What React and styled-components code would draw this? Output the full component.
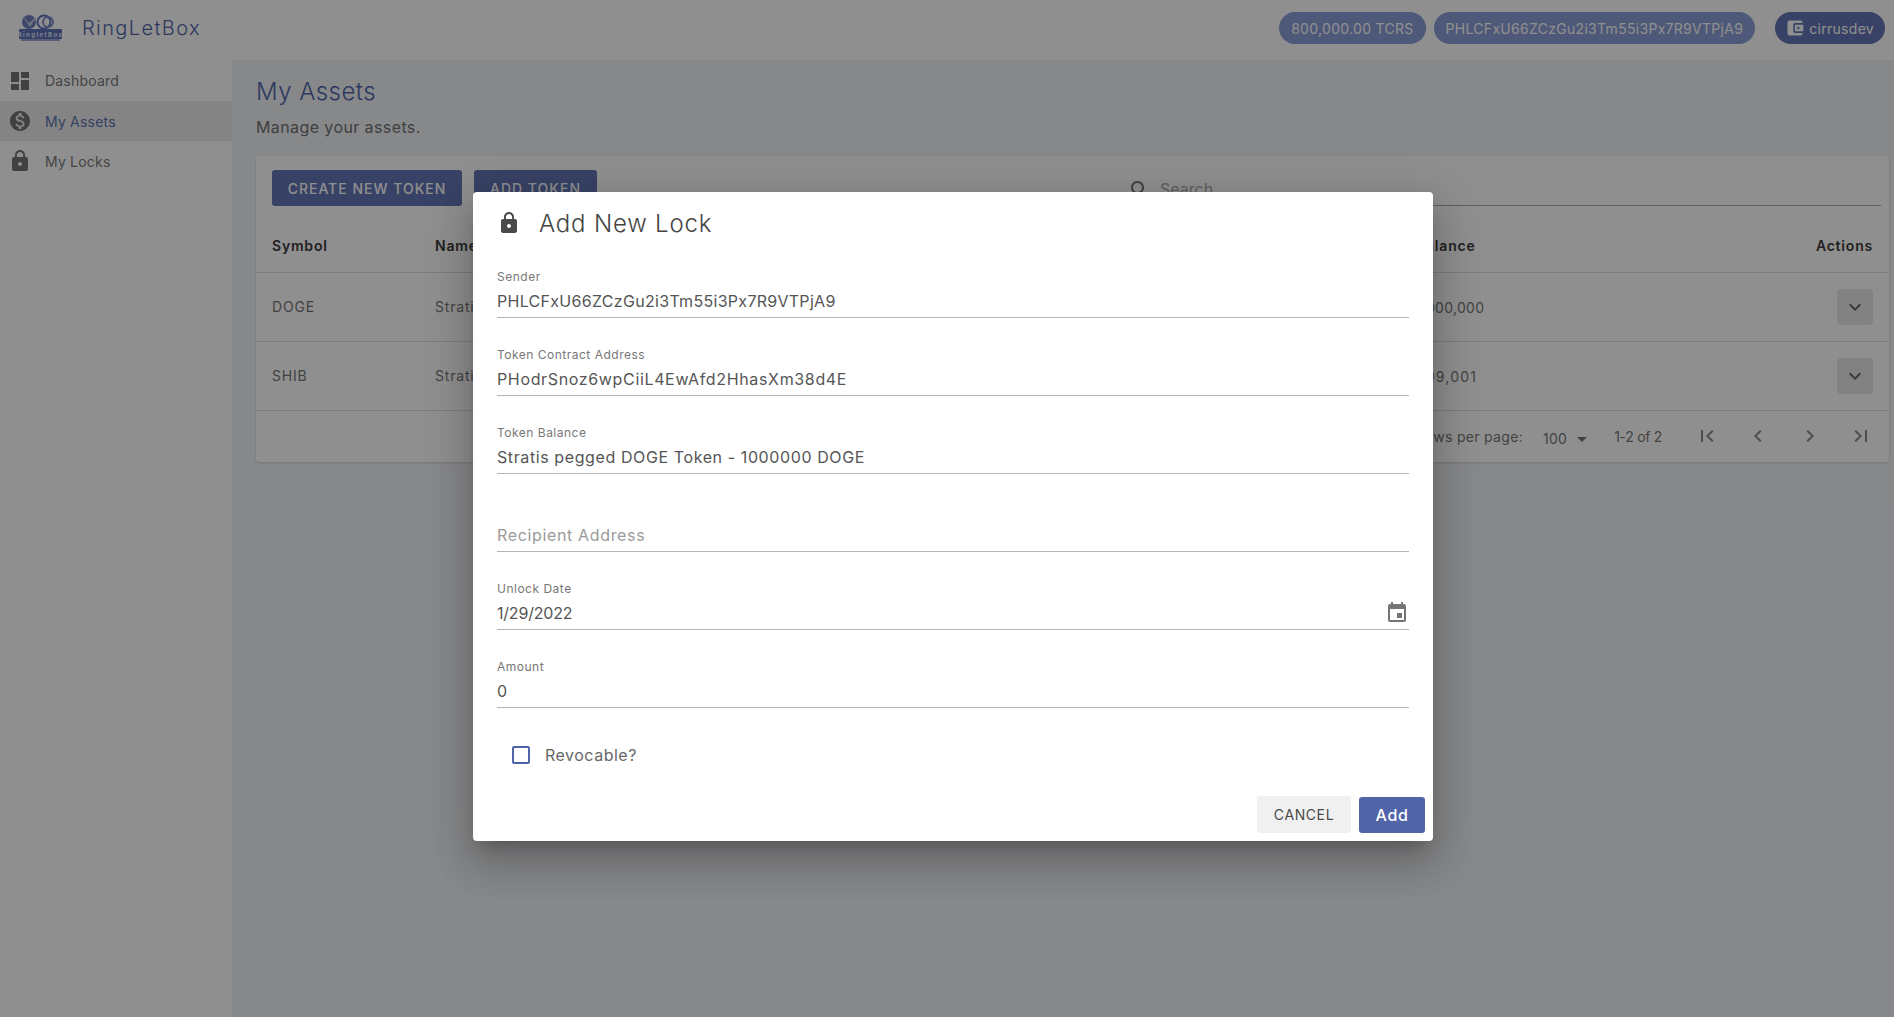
import React from 'react'
import styled, { createGlobalStyle } from 'styled-components'

const FONT = '"Inter", "Liberation Sans", sans-serif'

const ICONS = {
  dashboard: 'M3 13h8V3H3v10zm0 8h8v-6H3v6zm10 0h8V11h-8v10zm0-18v6h8V3h-8z',
  money: 'M12 2C6.48 2 2 6.48 2 12s4.48 10 10 10 10-4.48 10-10S17.52 2 12 2zm1.41 16.09V20h-2.67v-1.93c-1.71-.36-3.16-1.46-3.27-3.4h1.96c.1 1.05.82 1.87 2.65 1.87 1.96 0 2.4-.98 2.4-1.59 0-.83-.44-1.61-2.67-2.14-2.48-.6-4.18-1.62-4.18-3.67 0-1.72 1.39-2.84 3.11-3.21V4h2.67v1.95c1.86.45 2.79 1.86 2.85 3.39H14.3c-.05-1.11-.64-1.87-2.22-1.87-1.5 0-2.4.68-2.4 1.64 0 .84.65 1.39 2.67 1.91s4.18 1.39 4.18 3.91c-.01 1.83-1.38 2.83-3.12 3.16z',
  lock: 'M18 8h-1V6c0-2.76-2.24-5-5-5S7 3.24 7 6v2H6c-1.1 0-2 .9-2 2v10c0 1.1.9 2 2 2h12c1.1 0 2-.9 2-2V10c0-1.1-.9-2-2-2zm-6 9c-1.1 0-2-.9-2-2s.9-2 2-2 2 .9 2 2-.9 2-2 2zm3.1-9H8.9V6c0-1.71 1.39-3.1 3.1-3.1 1.71 0 3.1 1.39 3.1 3.1v2z',
  wallet: 'M21 18v1c0 1.1-.9 2-2 2H5c-1.11 0-2-.9-2-2V5c0-1.1.89-2 2-2h14c1.1 0 2 .9 2 2v1h-9c-1.11 0-2 .9-2 2v8c0 1.1.89 2 2 2h9zm-9-2h10V8H12v8zm4-2.5c-.83 0-1.5-.67-1.5-1.5s.67-1.5 1.5-1.5 1.5.67 1.5 1.5-.67 1.5-1.5 1.5z',
  event: 'M17 12h-5v5h5v-5zM16 1v2H8V1H6v2H5c-1.11 0-1.99.9-1.99 2L3 19c0 1.1.89 2 2 2h14c1.1 0 2-.9 2-2V5c0-1.1-.9-2-2-2h-1V1h-2zm3 18H5V8h14v11z',
  down: 'M7.41 8.59 12 13.17l4.59-4.58L18 10l-6 6-6-6 1.41-1.41z',
  first: 'M18.41 16.59L13.82 12l4.59-4.59L17 6l-6 6 6 6zM6 6h2v12H6z',
  prev: 'M15.41 16.59 10.83 12l4.58-4.59L14 6l-6 6 6 6 1.41-1.41z',
  next: 'M8.59 16.59 13.17 12 8.59 7.41 10 6l6 6-6 6-1.41-1.41z',
  last: 'M5.59 7.41L10.18 12l-4.59 4.59L7 18l6-6-6-6zM16 6h2v12h-2z',
  search: 'M15.5 14h-.79l-.28-.27C15.41 12.59 16 11.11 16 9.5 16 5.91 13.09 3 9.5 3S3 5.91 3 9.5 5.91 16 9.5 16c1.61 0 3.09-.59 4.23-1.57l.27.28v.79l5 4.99L20.49 19l-4.99-5zm-6 0C7.01 14 5 11.99 5 9.5S7.01 5 9.5 5 14 7.01 14 9.5 11.99 14 9.5 14z',
  caret: 'M7 10l5 5 5-5z'
}

const Icon = ({ name, size = 24, color = 'currentColor' }) => (
  <svg width={size} height={size} viewBox="0 0 24 24" fill={color} style={{ flexShrink: 0, display: 'block' }}>
    <path d={ICONS[name]} />
  </svg>
)

/* STYLES */
const Global = createGlobalStyle`
  html, body { margin: 0; padding: 0; height: 100%; }
  body { font-family: ${FONT}; background: #fff; overflow: hidden; }
  * { box-sizing: border-box; }
`

const Page = styled.div`
  position: relative;
  width: 1894px;
  height: 1017px;
  display: flex;
  flex-direction: column;
  overflow: hidden;
`

const TopBar = styled.header`
  height: 60px;
  flex-shrink: 0;
  display: flex;
  align-items: center;
  padding: 0 9px 4px 19px;
  background: #fff;
`

const Brand = styled.div`
  flex: 1;
  display: flex;
  align-items: center;
  gap: 19px;
  font-size: 20px;
  font-weight: 300;
  letter-spacing: 1.4px;
  color: #5065a8;
`

const Chip = styled.div`
  height: 32px;
  display: flex;
  align-items: center;
  gap: 4px;
  padding: 0 ${props => props.$right || 12}px 0 ${props => props.$left || 12}px;
  border-radius: 16px;
  margin-left: ${props => props.$gap || 0}px;
  font-size: 14px;
  letter-spacing: 0.3px;
  color: #fff;
  background: ${props => (props.$faded ? '#8b9dd6' : '#6476b6')};
`

const Body = styled.div`
  flex: 1;
  display: flex;
`

const Sidebar = styled.nav`
  width: 232px;
  flex-shrink: 0;
  background: #fff;
`

const NavItem = styled.div`
  height: ${props => props.$height || 40}px;
  display: flex;
  align-items: center;
  gap: 13px;
  padding-left: 8px;
  font-size: 14px;
  letter-spacing: 0.2px;
  color: ${props => (props.$active ? '#5f72b0' : '#7a7a7a')};
  background: ${props => (props.$active ? '#ebebeb' : 'transparent')};
  svg { color: #757575; }
`

const Main = styled.main`
  flex: 1;
  padding: 15px 5px 0 24px;
  background: #f1f3f7;
`

const Title = styled.h1`
  margin: 0;
  font-size: 24px;
  line-height: 34px;
  font-weight: 300;
  letter-spacing: 0.45px;
  color: #5065a8;
`

const Subtitle = styled.p`
  margin: 6px 0 17px;
  font-size: 16px;
  line-height: 24px;
  letter-spacing: 0.4px;
  color: #707070;
`

const Card = styled.section`
  height: 306px;
  border-radius: 4px;
  background: #fff;
  box-shadow: 0 1px 3px rgba(0, 0, 0, 0.15);
`

const Toolbar = styled.div`
  height: 51px;
  display: flex;
  align-items: flex-start;
  gap: 12px;
  padding: 14px 8px 0 16px;
`

const PrimaryButton = styled.div`
  height: 36px;
  display: flex;
  align-items: center;
  justify-content: center;
  width: ${props => props.$width}px;
  border-radius: 3px;
  background: #6476b6;
  color: #fff;
  font-size: 14px;
  font-weight: 500;
  letter-spacing: 1px;
`

const SearchBox = styled.div`
  width: 782px;
  height: 36px;
  margin-left: auto;
  display: flex;
  align-items: center;
  gap: 8px;
  padding: 2px 0 0 29px;
  border-bottom: 1px solid #aaa;
  font-size: 16px;
  color: #a8a8a8;
  svg { color: #757575; margin-top: 2px; }
`

const Row = styled.div`
  height: ${props => props.$height}px;
  display: grid;
  grid-template-columns: 163px 1fr 60px;
  align-items: center;
  padding: ${props => (props.$head ? '12px 16px 0' : '0 16px')};
  border-bottom: 1px solid #dedede;
  font-size: 14px;
  letter-spacing: 0.8px;
  color: ${props => (props.$head ? '#3a3a3a' : '#777')};
  font-weight: ${props => (props.$head ? 600 : 400)};
`

const CellText = styled.span`
  position: relative;
  top: ${props => (props.$head ? 0 : -1)}px;
`

const Balance = styled.span`
  position: absolute;
  left: 981px;
  letter-spacing: ${props => props.$spacing}px;
`

const RowCell = styled.div`
  position: relative;
  display: flex;
  align-items: center;
`

const ActionCell = styled.div`
  justify-self: end;
`

const ExpandButton = styled.div`
  width: 36px;
  height: 36px;
  display: flex;
  align-items: center;
  justify-content: center;
  border-radius: 4px;
  background: #e8e8e8;
  color: #6a6a6a;
`

const Pagination = styled.div`
  height: 51px;
  display: flex;
  align-items: center;
  justify-content: flex-end;
  padding-right: 16px;
  font-size: 14px;
  letter-spacing: 0.3px;
  color: #777;
`

const PerPage = styled.div`
  display: flex;
  align-items: center;
  gap: 3px;
  margin: 0 20px;
  position: relative;
  top: 2px;
`

const PageRange = styled.span`
  letter-spacing: -0.3px;
`

const PageIcon = styled.div`
  width: 24px;
  margin-left: ${props => props.$gap}px;
  color: #888;
  position: relative;
  top: -1px;
`

const Backdrop = styled.div`
  position: absolute;
  inset: 0;
  background: rgba(0, 0, 0, 0.44);
`

const Dialog = styled.div`
  position: absolute;
  left: 473px;
  top: 192px;
  width: 960px;
  height: 649px;
  display: flex;
  flex-direction: column;
  border-radius: 4px;
  background: #fff;
  box-shadow: 0 11px 15px -7px rgba(0, 0, 0, 0.2), 0 24px 38px 3px rgba(0, 0, 0, 0.14), 0 9px 46px 8px rgba(0, 0, 0, 0.12);
`

const DialogTitle = styled.div`
  height: 62px;
  display: flex;
  align-items: center;
  gap: 18px;
  padding-left: 24px;
  font-size: 24px;
  font-weight: 300;
  letter-spacing: 0.8px;
  color: #444;
  svg { color: #4a4a4a; }
`

const Fields = styled.div`
  padding: 0 24px;
`

const Field = styled.div`
  height: 78px;
  padding-top: 16px;
`

const FieldLabel = styled.div`
  height: 14px;
  line-height: 14px;
  font-size: 12px;
  letter-spacing: 0.5px;
  color: #777;
`

const FieldValue = styled.div`
  height: 34px;
  display: flex;
  align-items: center;
  justify-content: space-between;
  padding-top: 1px;
  border-bottom: 1px solid #b5b5b5;
  font-size: 16px;
  letter-spacing: ${props => props.$spacing}px;
  color: ${props => (props.$placeholder ? '#9a9a9a' : '#555')};
  svg { color: #757575; }
`

const CheckRow = styled.div`
  display: flex;
  align-items: center;
  gap: 15px;
  margin-top: 23px;
  padding-left: 15px;
  font-size: 16px;
  letter-spacing: 0.5px;
  color: #666;
`

const CheckBox = styled.div`
  width: 18px;
  height: 18px;
  border: 2px solid #5065a8;
  border-radius: 2px;
`

const DialogActions = styled.div`
  margin-top: auto;
  display: flex;
  align-items: center;
  justify-content: flex-end;
  gap: 8px;
  padding: 0 8px 8px 0;
`

const CancelButton = styled.div`
  width: 94px;
  height: 37px;
  display: flex;
  align-items: center;
  justify-content: center;
  border-radius: 3px;
  background: #f0f0f0;
  color: #4a4a4a;
  font-size: 14px;
  letter-spacing: 0.6px;
`

const AddButton = styled.div`
  width: 66px;
  height: 36px;
  display: flex;
  align-items: center;
  justify-content: center;
  border-radius: 3px;
  background: #5065a8;
  color: #fff;
  font-size: 16px;
  font-weight: 500;
  letter-spacing: 0.6px;
`

const LogoMark = () => (
  <svg width="44" height="28" viewBox="0 0 44 28">
    <circle cx="10" cy="8" r="7" fill="#6f80c0" />
    <path d="M3 1l7 8 8-7-7 11z" fill="#c9cfe6" />
    <circle cx="25" cy="8" r="6.5" fill="none" stroke="#5f72ba" strokeWidth="2" />
    <circle cx="29" cy="8" r="5" fill="none" stroke="#7f8fc8" strokeWidth="2" />
    <rect x="0" y="15" width="43" height="10" rx="1" fill="#5f72ba" />
    <rect x="2" y="25" width="39" height="2" fill="#9aa6d6" />
    <text x="21.5" y="22.5" fontSize="6" fontWeight="700" textAnchor="middle" fill="#dfe3f3" fontFamily="Inter, sans-serif">RingletBox</text>
  </svg>
)

const fields = [
  { label: 'Sender', value: 'PHLCFxU66ZCzGu2i3Tm55i3Px7R9VTPjA9', spacing: 0.3 },
  { label: 'Token Contract Address', value: 'PHodrSnoz6wpCiiL4EwAfd2HhasXm38d4E', spacing: 0.65 },
  { label: 'Token Balance', value: 'Stratis pegged DOGE Token - 1000000 DOGE', spacing: 0.6 },
  { label: '', value: 'Recipient Address', placeholder: true, spacing: 0.65 },
  { label: 'Unlock Date', value: '1/29/2022', icon: 'event', spacing: -0.2 },
  { label: 'Amount', value: '0', spacing: 0.3 }
]

const App = () => (
  <Page>
    <Global />
    <TopBar>
      <Brand><LogoMark />RingLetBox</Brand>
      <Chip $faded>800,000.00 TCRS</Chip>
      <Chip $faded $gap={8}>PHLCFxU66ZCzGu2i3Tm55i3Px7R9VTPjA9</Chip>
      <Chip $gap={20} $left={10} $right={11}><Icon name="wallet" size={20} />cirrusdev</Chip>
    </TopBar>
    <Body>
      <Sidebar>
        <NavItem $height={41}><Icon name="dashboard" />Dashboard</NavItem>
        <NavItem $active><Icon name="money" />My Assets</NavItem>
        <NavItem><Icon name="lock" />My Locks</NavItem>
      </Sidebar>
      <Main>
        <Title>My Assets</Title>
        <Subtitle>Manage your assets.</Subtitle>
        <Card>
          <Toolbar>
            <PrimaryButton $width={190}>CREATE NEW TOKEN</PrimaryButton>
            <PrimaryButton $width={123}>ADD TOKEN</PrimaryButton>
            <SearchBox><Icon name="search" />Search</SearchBox>
          </Toolbar>
          <Row $head $height={66}>
            <CellText $head>Symbol</CellText>
            <RowCell>Name<Balance $spacing={0.8}>Balance</Balance></RowCell>
            <ActionCell>Actions</ActionCell>
          </Row>
          <Row $height={69}>
            <CellText>DOGE</CellText>
            <RowCell><CellText>Stratis pegged DOGE Token</CellText><Balance $spacing={0.3}>1,000,000</Balance></RowCell>
            <ActionCell><ExpandButton><Icon name="down" /></ExpandButton></ActionCell>
          </Row>
          <Row $height={69}>
            <CellText>SHIB</CellText>
            <RowCell><CellText>Stratis pegged SHIB Token</CellText><Balance $spacing={1.2}>999,001</Balance></RowCell>
            <ActionCell><ExpandButton><Icon name="down" /></ExpandButton></ActionCell>
          </Row>
          <Pagination>
            <span>Rows per page:</span>
            <PerPage>100<Icon name="caret" /></PerPage>
            <PageRange>1-2 of 2</PageRange>
            <PageIcon $gap={33}><Icon name="first" /></PageIcon>
            <PageIcon $gap={27}><Icon name="prev" /></PageIcon>
            <PageIcon $gap={28}><Icon name="next" /></PageIcon>
            <PageIcon $gap={27}><Icon name="last" /></PageIcon>
          </Pagination>
        </Card>
      </Main>
    </Body>
    <Backdrop />
    <Dialog>
      <DialogTitle><Icon name="lock" />Add New Lock</DialogTitle>
      <Fields>
        {fields.map(f => (
          <Field key={f.value}>
            <FieldLabel>{f.label}</FieldLabel>
            <FieldValue $placeholder={f.placeholder} $spacing={f.spacing}>
              {f.value}
              {f.icon && <Icon name={f.icon} />}
            </FieldValue>
          </Field>
        ))}
        <CheckRow><CheckBox />Revocable?</CheckRow>
      </Fields>
      <DialogActions>
        <CancelButton>CANCEL</CancelButton>
        <AddButton>Add</AddButton>
      </DialogActions>
    </Dialog>
  </Page>
)

export default App
